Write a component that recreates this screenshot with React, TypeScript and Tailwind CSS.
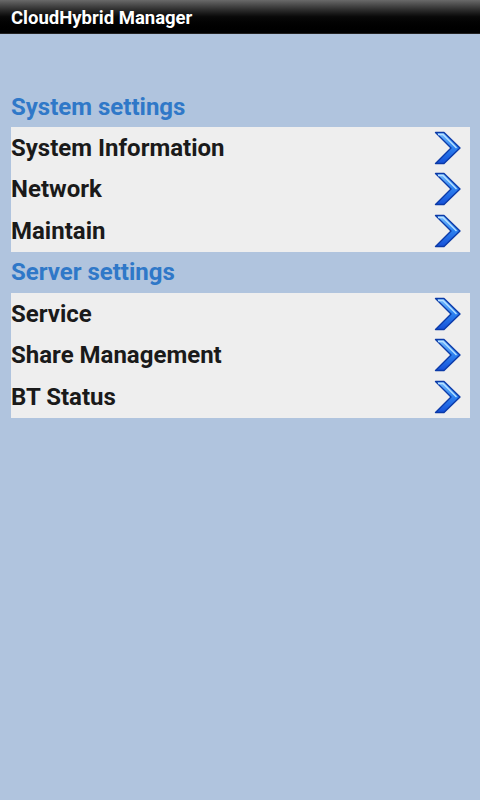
import { Fragment } from 'react';

type Section = { title: string; items: string[] };

const SECTIONS: Section[] = [
  { title: 'System settings', items: ['System Information', 'Network', 'Maintain'] },
  { title: 'Server settings', items: ['Service', 'Share Management', 'BT Status'] },
];

function ArrowIcon({ id }: { id: string }) {
  return (
    <svg width="28" height="34" viewBox="0 0 28 34">
      <defs>
        <linearGradient id={`g-${id}`} x1="0" y1="0" x2="0" y2="1">
          <stop offset="0" stopColor="#7cc0ff" />
          <stop offset="0.45" stopColor="#2f86f2" />
          <stop offset="1" stopColor="#1550d8" />
        </linearGradient>
      </defs>
      <polygon
        points="1.5,1.5 10,1.5 26,17 10,32.5 1.5,32.5 17,17"
        fill={`url(#g-${id})`}
        stroke="#0b3aa8"
        strokeWidth="1.4"
        strokeLinejoin="round"
      />
      <polyline points="4,3.5 9,3.5 22.5,17" fill="none" stroke="#b8e0ff" strokeWidth="1.4" strokeLinejoin="round" />
    </svg>
  );
}

export default function App() {
  return (
    <div className="w-[480px] h-[800px] bg-[#b0c4de] font-['Roboto',sans-serif] overflow-hidden">
      <div className="h-[34px] bg-gradient-to-b from-[#6a6a6a] via-[#0a0a0a] to-black border-b border-[#222] flex items-center pl-[11px] pt-[3px]">
        <span className="text-white font-bold text-[18.5px] leading-none">CloudHybrid Manager</span>
      </div>
      <div className="pt-[52px] px-[11px] pr-[10px]">
        {SECTIONS.map((section) => (
          <Fragment key={section.title}>
            <div className="h-[41px] flex items-center text-[#2f78c8] font-bold text-[24px] leading-none">
              {section.title}
            </div>
            <div className="bg-[#eeeeee] flex flex-col">
              {section.items.map((item) => (
                <div key={item} className="h-[41.67px] flex items-center justify-between pr-[8px]">
                  <span className="text-[#1a1a1a] font-bold text-[24px] leading-none">{item}</span>
                  <ArrowIcon id={item.replace(/\s/g, '')} />
                </div>
              ))}
            </div>
          </Fragment>
        ))}
      </div>
    </div>
  );
}
